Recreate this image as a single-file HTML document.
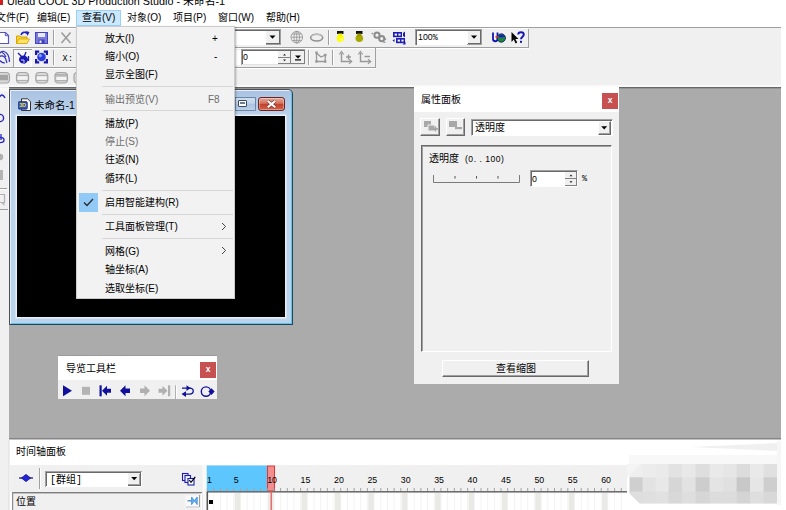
<!DOCTYPE html>
<html lang="zh-CN">
<head>
<meta charset="utf-8">
<title>Ulead COOL 3D Production Studio - 未命名-1</title>
<style>
html,body{margin:0;padding:0;}
body{width:786px;height:510px;overflow:hidden;background:#fff;position:relative;
 font-family:"Liberation Sans","Noto Sans CJK SC",sans-serif;font-size:10px;color:#000;}
.abs{position:absolute;}
#app{position:absolute;left:0;top:0;width:781px;height:510px;overflow:hidden;background:#fff;}
.t{position:absolute;white-space:nowrap;line-height:14px;}
.sm{font-size:11px;}
/* menubar */
#menubar .t{top:11px;font-size:10px;}
/* toolbars */
#tb{position:absolute;left:0;top:27px;width:781px;height:60px;background:#f0f0f0;border-top:1px solid #a0a0a0;box-sizing:border-box;box-shadow:inset 0 -2px 0 #f9f9f9;}
.vsep{position:absolute;width:1px;background:#a0a0a0;box-shadow:1px 0 0 #fff;}
.hsep{position:absolute;height:1px;background:#a0a0a0;box-shadow:0 1px 0 #fff;}
/* workspace */
#ws{position:absolute;left:0;top:87px;width:781px;height:351px;background:#ababab;box-shadow:inset 0 1px 0 #666,inset 0 2px 0 #939393;}
/* dropdown menu */
#dd{position:absolute;left:76px;top:26px;width:159px;height:273px;background:#f2f2f2;border:1px solid #ccc;box-sizing:border-box;box-shadow:1px 1px 2px rgba(0,0,0,.3);}
#dd .t{left:28px;font-size:10px;margin-top:1px;}
#dd .k{left:auto;}
#dd .g{color:#6d6d6d;}
#dd .s{position:absolute;left:25px;right:1px;height:1px;background:#d7d7d7;}
.sunk{position:absolute;box-sizing:border-box;background:#fff;border:1px solid;border-color:#a0a0a0 #fff #fff #a0a0a0;box-shadow:inset 1px 1px 0 #696969;}
.btn{position:absolute;box-sizing:border-box;background:#f0f0f0;border:1px solid;border-color:#fff #696969 #696969 #fff;box-shadow:inset -1px -1px 0 #a0a0a0;}
.redx{position:absolute;background:#c75050;color:#fff;font-weight:bold;font-size:8.5px;text-align:center;}
</style>
</head>
<body>
<div id="app">

<!-- title bar (cut) -->
<div class="abs" style="left:0;top:0;width:3px;height:5px;background:#d21f1f"></div>
<div class="t" style="left:7px;top:-6px;font-size:10.8px;">Ulead COOL 3D Production Studio - 未命名-1</div>

<!-- menubar -->
<div id="menubar">
 <div class="abs" style="left:76px;top:10px;width:45px;height:16px;background:#cce8ff;border:1px solid #99d1ff;box-sizing:border-box"></div>
 <div class="t" style="left:-4px">文件(F)</div>
 <div class="t" style="left:37px">编辑(E)</div>
 <div class="t" style="left:82px">查看(V)</div>
 <div class="t" style="left:127px">对象(O)</div>
 <div class="t" style="left:173px">项目(P)</div>
 <div class="t" style="left:218px">窗口(W)</div>
 <div class="t" style="left:266px">帮助(H)</div>
</div>

<!-- toolbar area -->
<div id="tb">

<svg class="abs" style="left:0;top:-1px" width="781" height="61" viewBox="0 27 781 61" shape-rendering="auto">
 <!-- toolbar borders -->
 <rect x="0" y="47" width="529" height="1" fill="#a0a0a0"/><rect x="0" y="48" width="529" height="1" fill="#fff"/>
 <rect x="0" y="67" width="376" height="1" fill="#a0a0a0"/><rect x="0" y="68" width="376" height="1" fill="#fff"/>
 <rect x="528" y="28" width="1" height="19" fill="#a0a0a0"/>
 <rect x="375" y="48" width="1" height="19" fill="#a0a0a0"/>
 <rect x="0" y="28" width="529" height="1" fill="#fff"/>
 <!-- row1 -->
 <path d="M-2 32.5 H5.5 L8.5 35.5 V43.5 H-2" fill="#fff" stroke="#5555c4" stroke-width="1.2"/>
 <path d="M5.3 32.5 V35.7 H8.5" fill="none" stroke="#5555c4" stroke-width="1"/>
 <!-- open -->
 <path d="M16.5 43.5 V36 H20 L21 37 H27 V43.5 Z" fill="#f5d13a" stroke="#d9a400" stroke-width="1"/>
 <path d="M16.5 43.5 L19 39 H29.5 L27 43.5 Z" fill="#ffe36a" stroke="#d9a400" stroke-width=".8"/>
 <path d="M21 35 C22 32 25 31.5 27 33.5" fill="none" stroke="#2222c0" stroke-width="1.6"/>
 <path d="M25.5 31 L29.5 32 L27.5 36 Z" fill="#2222c0"/>
 <!-- save -->
 <rect x="35.5" y="32.5" width="12" height="11" fill="#7a7ad8" stroke="#4444c0" stroke-width="1"/>
 <rect x="38" y="33" width="7" height="4" fill="#e8e8ff"/>
 <rect x="38.5" y="39.5" width="6" height="4" fill="#4040b8"/><rect x="39.5" y="40.5" width="2" height="2.5" fill="#e8e8ff"/>
 <rect x="53" y="30" width="1" height="15" fill="#a0a0a0"/><rect x="54" y="30" width="1" height="15" fill="#fff"/>
 <path d="M61.5 32.5 L70.5 43 M70.5 32.5 L61.5 43" stroke="#9a9a9a" stroke-width="1.5" fill="none"/>
 <!-- combo row1 (partly hidden) -->
 <rect x="150" y="30" width="131" height="15" fill="#fff"/>
 <rect x="150" y="30" width="131" height="1" fill="#696969"/><rect x="150" y="29" width="131" height="1" fill="#a0a0a0"/>
 <rect x="266" y="31" width="14" height="13" fill="#f0f0f0"/>
 <rect x="266" y="43" width="14" height="1" fill="#696969"/><rect x="279" y="31" width="1" height="13" fill="#696969"/>
 <rect x="266" y="44" width="15" height="1" fill="#a0a0a0"/><rect x="280" y="30" width="1" height="15" fill="#a0a0a0"/>
 <path d="M269.5 35.5 H275.5 L272.5 38.8 Z" fill="#000"/>
 <!-- globe -->
 <g stroke="#909090" fill="none" stroke-width=".8"><circle cx="296.8" cy="37.2" r="5.8"/><ellipse cx="296.8" cy="37.2" rx="2.8" ry="5.8"/><path d="M291 37.2 H302.6 M296.8 31.4 V43 M292 34 H301.6 M292 40.4 H301.6"/></g>
 <!-- oval -->
 <g stroke="#909090" fill="none"><ellipse cx="316.7" cy="37.6" rx="6" ry="3.4" stroke-width="1.6"/><path d="M311 36.5 C314 33.5 320 33.5 322.5 36.5" stroke="#c8c8c8" stroke-width="1"/></g>
 <rect x="328" y="30" width="1" height="15" fill="#a0a0a0"/><rect x="329" y="30" width="1" height="15" fill="#fff"/>
 <!-- bulbs -->
 <rect x="337" y="31" width="6.5" height="3" fill="#111"/><circle cx="340.3" cy="38.3" r="3.6" fill="#ffff00"/><rect x="338.3" y="33.5" width="4" height="3" fill="#f4f400"/>
 <circle cx="341.5" cy="39.5" r="1" fill="#fff"/>
 <rect x="356" y="31" width="6.5" height="3" fill="#111"/><circle cx="359.3" cy="38.3" r="3.8" fill="#a8a800"/><rect x="357.3" y="33.5" width="4" height="3" fill="#989800"/>
 <!-- gears -->
 <g fill="none" stroke="#8c8c8c" stroke-width="2"><circle cx="377" cy="35.2" r="2.6"/><circle cx="381.7" cy="38.6" r="2.6"/></g>
 <path d="M373 33 l-1.3 1 M383 42 l2.4 .3 M385 40 l1 -1.5" stroke="#8c8c8c" stroke-width="1.2"/>
 <!-- blue grid icon -->
 <g fill="#1c1cb4"><rect x="393" y="32" width="9" height="1.6"/><rect x="393" y="35.6" width="9" height="1.6"/><rect x="393" y="32" width="1.6" height="5"/><rect x="397" y="32" width="1.4" height="5"/><rect x="400.6" y="32" width="1.4" height="5"/>
 <rect x="396" y="38" width="9" height="1.6"/><rect x="396" y="41.6" width="9" height="1.6"/><rect x="396" y="38" width="1.6" height="5"/><rect x="400" y="38" width="1.4" height="5"/><rect x="403.6" y="38" width="1.4" height="5"/>
 <path d="M403 33 l2 -1.5 v6 l-2 -1.5z M392.5 40.5 l2 -1.5 v3z M402.5 44.5 h3 v-3z"/></g>
 <!-- combo 100% -->
 <rect x="416" y="30" width="65" height="15" fill="#fff"/>
 <rect x="416" y="30" width="65" height="1" fill="#696969"/><rect x="416" y="30" width="1" height="15" fill="#696969"/>
 <rect x="415" y="29" width="67" height="1" fill="#a0a0a0"/><rect x="415" y="29" width="1" height="16" fill="#a0a0a0"/>
 <rect x="468" y="31" width="13" height="13" fill="#f0f0f0"/><rect x="468" y="43" width="13" height="1" fill="#696969"/><rect x="480" y="31" width="1" height="13" fill="#696969"/>
 <rect x="467" y="44" width="15" height="1" fill="#a0a0a0"/><rect x="481" y="30" width="1" height="15" fill="#a0a0a0"/>
 <path d="M471 35.5 H477 L474 38.8 Z" fill="#000"/>
 <text x="418" y="40.3" font-family="Liberation Sans, sans-serif" font-size="8.8" fill="#000">100<tspan font-family="Liberation Mono, monospace" font-size="8.4">%</tspan></text>
 <!-- U + globe -->
 <path d="M493 32.5 V39 C493 42 497.5 42 497.5 39 V32.5" fill="none" stroke="#1414b4" stroke-width="1.8"/>
 <circle cx="501.3" cy="38" r="4.2" fill="#1a8a3a"/><path d="M498 36.5 C500 34 503 34 505 36.5 C503 37.5 500 38 498 36.5z" fill="#1c1ccc"/><circle cx="501.3" cy="38" r="4.2" fill="none" stroke="#10106c" stroke-width=".8"/>
 <rect x="495.5" y="36" width="3" height="1.5" fill="#e03030"/>
 <!-- pointer ? -->
 <path d="M511.5 32 V42 L513.8 39.6 L515.6 43.4 L517.2 42.6 L515.4 39 H518.5 Z" fill="#000"/>
 <path d="M518.2 34.6 C518.2 31.4 523.8 31.4 523.8 34.6 C523.8 36.6 521 36.8 521 39.2" fill="none" stroke="#1414b4" stroke-width="1.9"/><rect x="520" y="40.8" width="2" height="2" fill="#1414b4"/>
 <!-- row2 -->
 <g fill="none" stroke="#3030c0" stroke-width="1.2"><path d="M-1 54 C2 50 6 51 8 55 C9.5 58 9.5 60 9.5 62"/><path d="M-1 57 C1 55 4 55.5 5.5 58.5 C6 60 6.5 61.5 7 63"/><path d="M-1 60 C1 62 3 63 5 63"/><path d="M2 52.5 C3.5 53 5 55 6 57"/></g>
 <rect x="13.5" y="49.5" width="18" height="17" fill="#f6f6f6" stroke="#fff" stroke-width="1"/><rect x="13" y="49" width="19" height="1" fill="#a0a0a0"/><rect x="13" y="49" width="1" height="18" fill="#a0a0a0"/>
 <ellipse cx="23.5" cy="59.5" rx="4.5" ry="4" fill="#1818b0"/><path d="M18 53 L24 59 M26 52 L24 57 M28.5 56 V61 M20 60.5 H24.5 V63.5" stroke="#1818b0" stroke-width="1.3" fill="none"/><path d="M21 60 H24 V63" stroke="#fff" stroke-width=".8" fill="none"/>
 <circle cx="41.5" cy="57" r="4.3" fill="#2a3ee0"/><circle cx="40.3" cy="55.6" r="1.6" fill="#8aa0ff"/>
 <g fill="#1818b0"><path d="M35 50.5 h4.2 v2.2 h-2 v2.2 h-2.2z M48 50.5 h-4.2 v2.2 h2 v2.2 h2.2z M35 63.5 h4.2 v-2.2 h-2 v-2.2 h-2.2z M48 63.5 h-4.2 v-2.2 h2 v-2.2 h2.2z"/></g>
 <rect x="53" y="50" width="1" height="15" fill="#a0a0a0"/><rect x="54" y="50" width="1" height="15" fill="#fff"/>
 <text x="62.5" y="61" font-family="Liberation Mono, monospace" font-size="8.4" fill="#000" letter-spacing=".4">X:</text>
 <!-- input row2 -->
 <rect x="150" y="50" width="129" height="15" fill="#fff"/>
 <rect x="241" y="49" width="64" height="1" fill="#a0a0a0"/><rect x="241" y="49" width="1" height="16" fill="#a0a0a0"/>
 <rect x="242" y="50" width="63" height="1" fill="#696969"/><rect x="242" y="50" width="1" height="14" fill="#696969"/>
 <rect x="242" y="64" width="63" height="1" fill="#e3e3e3"/>
 <rect x="278" y="51" width="13" height="13" fill="#f0f0f0"/><rect x="278" y="57" width="13" height="1" fill="#808080"/><rect x="278" y="63" width="13" height="1" fill="#808080"/><rect x="290" y="51" width="1" height="13" fill="#808080"/>
 <path d="M283 55.5 h3 l-1.5 -1.8z M283 59.5 h3 l-1.5 1.8z" fill="#222"/>
 <rect x="291" y="51" width="13" height="13" fill="#f0f0f0"/><rect x="291" y="63" width="14" height="1" fill="#808080"/><rect x="304" y="50" width="1" height="14" fill="#808080"/>
 <path d="M295 55.5 H301 L298 58.6 Z" fill="#000"/><rect x="295" y="59.3" width="6" height="1.2" fill="#000"/>
 <text x="243" y="59.8" font-family="Liberation Sans, sans-serif" font-size="8.8" fill="#000">0</text>
 <rect x="308" y="50" width="1" height="15" fill="#a0a0a0"/><rect x="309" y="50" width="1" height="15" fill="#fff"/>
 <g fill="none" stroke="#989898" stroke-width="1.3"><path d="M316.5 52.5 V61.5 H326 M316.5 53 L321 57 L325.5 55 L325 61.5"/></g>
 <g fill="#989898"><rect x="315.3" y="51.5" width="2.4" height="2.4"/><rect x="315.3" y="60.3" width="2.4" height="2.4"/><rect x="324" y="60.3" width="2.4" height="2.4"/><rect x="324" y="53.8" width="2.4" height="2.4"/></g>
 <rect x="332" y="50" width="1" height="15" fill="#a0a0a0"/><rect x="333" y="50" width="1" height="15" fill="#fff"/>
 <g fill="none" stroke="#989898" stroke-width="1.4"><path d="M341.5 53 V61.5 H351 M346 57 h5 M348.5 54.5 v5"/><path d="M339.3 54.5 L341.5 51.5 L343.7 54.5 M349 59.3 L351.8 61.5 L349 63.7" stroke-width="1.1"/></g>
 <g fill="none" stroke="#989898" stroke-width="1.4"><path d="M360.5 53 V61.5 H370 M364.5 56.5 h5.5"/><path d="M358.3 54.5 L360.5 51.5 L362.7 54.5 M368 59.3 L370.8 61.5 L368 63.7" stroke-width="1.1"/></g>
 <!-- row3 grey icons -->
 <g stroke="#a6a6a6" stroke-width="1.2">
  <rect x="-3" y="72.5" width="12.5" height="10.5" rx="3.5" fill="#dadada"/><rect x="-3" y="74.8" width="11" height="5.5" fill="#a4a4a4" stroke="none"/>
  <rect x="16.5" y="72.5" width="12" height="10.5" rx="3.5" fill="#d8d8d8"/><rect x="17.6" y="76.2" width="9.8" height="3.8" fill="#f4f4f4" stroke="none"/><path d="M17 75.6 H28 M17 80.4 H28" fill="none" stroke-width=".9"/>
  <rect x="35.8" y="72.5" width="12" height="10.5" rx="3.5" fill="#d8d8d8"/><rect x="37" y="76.2" width="9.6" height="3.8" fill="#f4f4f4" stroke="none"/><path d="M36.3 75.6 H47.3 M36.3 80.4 H47.3" fill="none" stroke-width=".9"/>
  <rect x="55" y="72.5" width="12.5" height="10.5" rx="3.5" fill="#d0d0d0"/><rect x="56.4" y="76.6" width="9.8" height="3.6" fill="#f4f4f4" stroke="none"/><path d="M55.5 74.6 H67 M55.5 76 H67 M55.5 80.6 H67" fill="none" stroke-width=".9"/>
  <rect x="74" y="72.5" width="12.5" height="10.5" rx="3.5" fill="#dcdcdc"/>
 </g>
</svg>

</div>

<!-- workspace -->
<div id="ws">

<!-- left vertical toolbar -->
<div class="abs" style="left:0;top:0;width:9px;height:423px;background:#f0f0f0;"></div>
<svg class="abs" style="left:0;top:0" width="9" height="130" viewBox="0 88 9 130">
 <rect x="8" y="88" width="1" height="123" fill="#fafafa"/>
 <rect x="0" y="210" width="8" height="1" fill="#a0a0a0"/>
 <rect x="0" y="89" width="8" height="3.5" fill="#fafafa"/>
 <path d="M-1 99 C1 95 3 95 5 99" fill="none" stroke="#2828c0" stroke-width="1.4"/>
 <circle cx="0" cy="119" r="3.6" fill="none" stroke="#2828c0" stroke-width="1.4"/>
 <ellipse cx="0" cy="141" rx="4" ry="2.6" fill="none" stroke="#2828c0" stroke-width="1.4"/><path d="M1 135 V141" stroke="#2828c0" stroke-width="1.3"/>
 <circle cx="0" cy="158" r="3.2" fill="#b0b0b0"/>
 <rect x="-1" y="171" width="4" height="10" fill="#b4b4b4"/>
 <rect x="0" y="189" width="7" height="1" fill="#a0a0a0"/><rect x="0" y="190" width="7" height="1" fill="#fff"/>
 <path d="M-1 195.5 H4.5 V203.5 H-1 M2 203.5 L4.5 206" fill="none" stroke="#b0b0b0" stroke-width="1.2"/>
</svg>

<!-- child window -->
<div class="abs" id="cw" style="left:9px;top:2px;width:284px;height:236px;box-sizing:border-box;border:1px solid;border-color:#505050 #1c4a5c #1c4a5c #505050;border-radius:1px 5px 1px 1px;background:linear-gradient(#a9c3e2 0,#bdd3ec 28px,#bcd3ec 100%);box-shadow:inset 1px 1px 0 #e4eefa,inset -1px -1px 0 #62c0e6;">
 <div class="abs" style="left:7px;top:26px;width:268px;height:201px;background:#000;box-shadow:0 0 0 1.5px #e9f0f9;"></div>
 <!-- icon -->
 <svg class="abs" style="left:8px;top:8px" width="14" height="14" viewBox="0 0 14 14">
  <path d="M3.5 .8 H9.5 L12.5 3.6 V12.5 H3.5 Z" fill="#fff" stroke="#333" stroke-width="1"/>
  <rect x=".3" y="3.6" width="9" height="7.6" rx="1.2" fill="#2a52c0" stroke="#1a2e7c" stroke-width=".8"/>
  <text x="1.2" y="9.4" font-family="Liberation Sans, sans-serif" font-weight="bold" font-size="5.6" fill="#f6d81c" letter-spacing="-.3">3D</text>
 </svg>
 <div class="t" style="left:24px;top:8px;font-size:10.5px;">未命名-1</div>
 <!-- buttons -->
 <div class="abs" style="left:205px;top:7px;width:41px;height:14px;box-sizing:border-box;border:1px solid #6d86a6;border-radius:3px 0 0 3px;background:linear-gradient(#cfdff1 0,#bfd2ea 45%,#a9c2e0 50%,#bcd1ea 100%);"></div>
 <div class="abs" style="left:225px;top:8px;width:1px;height:12px;background:#7f98b8"></div>
 <div class="abs" style="left:228px;top:10px;width:9px;height:7px;box-sizing:border-box;border:1px solid #3b4a60;border-radius:1px;background:#fff;box-shadow:inset 0 0 0 1px #fff, inset 0 2px 0 1px #6a7a90;"></div>
 <div class="abs" style="left:248px;top:7px;width:27px;height:14px;box-sizing:border-box;border:1px solid #6b2420;border-radius:3px;background:linear-gradient(#e3a99b 0,#d4715c 45%,#c1402a 50%,#d0624a 100%);box-shadow:inset 0 0 0 1px rgba(255,255,255,.35);"></div>
 <svg class="abs" style="left:255px;top:9px" width="13" height="11" viewBox="0 0 13 11"><path d="M2.8 2 L10.2 8.2 M10.2 2 L2.8 8.2" stroke="#7a3a32" stroke-width="3.4"/><path d="M2.8 2 L10.2 8.2 M10.2 2 L2.8 8.2" stroke="#fff" stroke-width="2.1"/></svg>
</div>

<!-- nav toolbar -->
<div class="abs" style="left:58px;top:268px;width:159px;height:44px;background:#f0f0f0;overflow:hidden">
 <div class="abs" style="left:0;top:0;width:159px;height:25px;background:#fff;box-shadow:inset 0 1px 0 #9a9a9a"></div>
 <div class="t" style="left:8px;top:7px;font-size:10px;">导览工具栏</div>
 <div class="redx" style="left:142px;top:7px;width:16px;height:16px;line-height:15px;">x</div>
 <svg class="abs" style="left:0;top:23px" width="160" height="22" viewBox="58 376.7 160 22">
  <path d="M63 384 L72 389.5 L63 395 Z" fill="#10109c"/>
  <rect x="82" y="385.5" width="8" height="8" fill="#b4b4b4"/>
  <rect x="99.5" y="384" width="2.2" height="11" fill="#10109c"/><path d="M102 389.5 L107 384.5 V387.5 H111 V391.5 H107 V394.5 Z" fill="#10109c"/>
  <path d="M120 389.5 L125.5 384 V387.3 H130 V391.7 H125.5 V395 Z" fill="#10109c"/>
  <path d="M150 389.5 L144.5 384 V387.3 H140 V391.7 H144.5 V395 Z" fill="#b0b0b0"/>
  <rect x="168" y="384" width="2.2" height="11" fill="#b0b0b0"/><path d="M167.5 389.5 L162.5 384.5 V387.5 H158.5 V391.5 H162.5 V394.5 Z" fill="#b0b0b0"/>
  <rect x="175" y="384" width="1" height="14.5" fill="#b0b0b0"/><rect x="176" y="384" width="1" height="14.5" fill="#fff"/>
  <g fill="none" stroke="#10109c" stroke-width="1.3"><path d="M182 386.8 H189.5 C194.5 386.8 194.5 392.8 189.5 392.8 H184"/></g>
  <path d="M186.5 384 L190.5 386.8 L186.5 389.6 Z M186 390 L181.5 392.8 L186 395.6 Z" fill="#10109c"/>
  <circle cx="206" cy="390.3" r="4.7" fill="none" stroke="#10109c" stroke-width="1.4"/><path d="M211.5 387 L214.6 390.3 L211.5 393.6 L208.4 390.3 Z" fill="#10109c"/>
 </svg>
</div>

<!-- property panel -->
<div class="abs" id="pp" style="left:414px;top:0;width:205px;height:297px;background:#f0f0f0;">
 <div class="abs" style="left:0;top:0;width:205px;height:25px;background:#fff"></div>
 <div class="t" style="left:7px;top:6px;font-size:10px;">属性面板</div>
 <div class="redx" style="left:188px;top:6px;width:16px;height:16px;line-height:15px;">x</div>
 <div class="btn" style="left:6px;top:31px;width:20px;height:18px;"></div>
 <div class="btn" style="left:32px;top:31px;width:19px;height:18px;"></div>
 <svg class="abs" style="left:7px;top:31px" width="44" height="18" viewBox="0 0 44 18">
  <g fill="#a8a8a8"><rect x="3" y="3" width="7" height="6"/><rect x="7" y="7" width="7" height="6" stroke="#f0f0f0" stroke-width="1"/><path d="M12 11 h5 M14.5 8.5 v5" stroke="#a0a0a0" stroke-width="1.4"/>
  <rect x="28" y="3" width="8" height="6"/><rect x="34" y="9" width="7" height="2.2"/></g>
 </svg>
 <div class="sunk" style="left:57px;top:32px;width:142px;height:17px;"></div>
 <div class="btn" style="left:184px;top:34px;width:13px;height:14px;"></div>
 <svg class="abs" style="left:184px;top:34px" width="13" height="14" viewBox="0 0 13 14"><path d="M3.2 5.3 H9.2 L6.2 8.6 Z" fill="#000"/></svg>
 <div class="t" style="left:61px;top:34px;font-size:10px;">透明度</div>
 <!-- group -->
 <div class="abs" style="left:7px;top:58px;width:191px;height:207px;box-sizing:border-box;border:1px solid;border-color:#696969 #fff #fff #696969;box-shadow:inset 1px 1px 0 #a0a0a0;"></div>
 <div class="t" style="left:15px;top:65px;font-size:10px;">透明度<span style="font-size:8.6px;letter-spacing:.5px;margin-left:6px">(0. . 100)</span></div>
 <svg class="abs" style="left:17px;top:86px" width="92" height="12" viewBox="431 173 92 12">
  <path d="M433.5 175 V182.5 H519.5 V175" fill="none" stroke="#7a7a7a" stroke-width="1"/>
  <path d="M455 176 v2.6 M476.5 176 v2.6 M498 176 v2.6" stroke="#555" stroke-width="1"/>
 </svg>
 <div class="sunk" style="left:116px;top:83px;width:48px;height:17px;"></div>
 <div class="t" style="left:118px;top:85px;font-size:8.8px;">0</div>
 <svg class="abs" style="left:151px;top:85px" width="12" height="14" viewBox="0 0 12 14"><rect width="12" height="14" fill="#f0f0f0"/><rect y="6" width="12" height="1" fill="#808080"/><rect y="13" width="12" height="1" fill="#808080"/><rect x="11" width="1" height="14" fill="#808080"/><path d="M4.5 4.3 h3 l-1.5 -1.8z M4.5 9.3 h3 l-1.5 1.8z" fill="#222"/></svg>
 <div class="t" style="left:168px;top:85px;font-family:'Liberation Mono',monospace;font-size:8.4px;">%</div>
 <div class="btn" style="left:28px;top:273px;width:147px;height:17px;"></div>
 <div class="t" style="left:28px;top:275px;width:148px;text-align:center;font-size:10px;">查看缩图</div>
</div>

</div>

<!-- timeline -->
<div id="tl">

<div class="abs" style="left:9px;top:438px;width:772px;height:72px;background:#fff;"></div>
<svg class="abs" style="left:0;top:437px;filter:none" width="781" height="73" viewBox="0 437 781 73" font-family="Liberation Sans, sans-serif" font-size="8.8" fill="#000">
 <rect x="0" y="438" width="9" height="72" fill="#f0f0f0"/>
 <rect x="9" y="438" width="772" height="1.5" fill="#858585"/>
 <rect x="8.5" y="439" width="1" height="71" fill="#dcdcdc"/>
 <!-- toolbar row -->
 <rect x="9" y="465" width="620" height="27" fill="#f0f0f0"/>
 <path d="M19 478 H33" stroke="#10106c" stroke-width="1.2"/><path d="M26 474.4 L30.6 478 L26 481.6 L21.4 478 Z" fill="#2424d8" stroke="#10108c" stroke-width=".8"/>
 <rect x="39" y="468" width="1" height="21" fill="#a0a0a0"/><rect x="40" y="468" width="1" height="21" fill="#fff"/>
 <!-- combo -->
 <rect x="45" y="471" width="97" height="16" fill="#fff"/>
 <rect x="45" y="471" width="97" height="1" fill="#a0a0a0"/><rect x="45" y="471" width="1" height="16" fill="#a0a0a0"/>
 <rect x="46" y="472" width="95" height="1" fill="#696969"/><rect x="46" y="472" width="1" height="14" fill="#696969"/>
 <rect x="46" y="486" width="96" height="1" fill="#fff"/><rect x="141" y="472" width="1" height="15" fill="#fff"/>
 <rect x="128" y="473" width="13" height="13" fill="#f0f0f0"/><rect x="128" y="485" width="13" height="1" fill="#696969"/><rect x="140" y="473" width="1" height="13" fill="#696969"/><rect x="128" y="484" width="12" height="1" fill="#a0a0a0"/><rect x="139" y="474" width="1" height="11" fill="#a0a0a0"/>
 <path d="M131.2 477 H137.2 L134.2 480.3 Z" fill="#000"/>
 <!-- copy/check icon -->
 <g fill="#f0f0f0" stroke="#1c1cb4" stroke-width="1.1"><rect x="182.5" y="473.5" width="5.5" height="7"/><rect x="185" y="475.5" width="5.5" height="7"/><rect x="188" y="478.5" width="6" height="6.5" fill="#fff"/></g>
 <path d="M189.2 480 L191 482.3 L195.3 476.8" fill="none" stroke="#000" stroke-width="1.2"/>
 <!-- ruler -->
 <rect x="206.5" y="465.5" width="61" height="25.5" fill="#5cc6fd"/>
 <rect x="267.5" y="466" width="7" height="25" fill="#f48e8e" stroke="#e23636" stroke-width="1"/>
 <rect x="206.6" y="488" width="1" height="3" fill="#a4a4a4"/><rect x="213.3" y="488" width="1" height="3" fill="#a4a4a4"/><rect x="220.0" y="488" width="1" height="3" fill="#a4a4a4"/><rect x="226.6" y="488" width="1" height="3" fill="#a4a4a4"/><rect x="233.3" y="488" width="1" height="3" fill="#a4a4a4"/><rect x="240.0" y="488" width="1" height="3" fill="#a4a4a4"/><rect x="246.7" y="488" width="1" height="3" fill="#a4a4a4"/><rect x="253.4" y="488" width="1" height="3" fill="#a4a4a4"/><rect x="260.0" y="488" width="1" height="3" fill="#a4a4a4"/><rect x="266.7" y="488" width="1" height="3" fill="#a4a4a4"/><rect x="273.4" y="488" width="1" height="3" fill="#a4a4a4"/><rect x="280.1" y="488" width="1" height="3" fill="#a4a4a4"/><rect x="286.8" y="488" width="1" height="3" fill="#a4a4a4"/><rect x="293.4" y="488" width="1" height="3" fill="#a4a4a4"/><rect x="300.1" y="488" width="1" height="3" fill="#a4a4a4"/><rect x="306.8" y="488" width="1" height="3" fill="#a4a4a4"/><rect x="313.5" y="488" width="1" height="3" fill="#a4a4a4"/><rect x="320.2" y="488" width="1" height="3" fill="#a4a4a4"/><rect x="326.8" y="488" width="1" height="3" fill="#a4a4a4"/><rect x="333.5" y="488" width="1" height="3" fill="#a4a4a4"/><rect x="340.2" y="488" width="1" height="3" fill="#a4a4a4"/><rect x="346.9" y="488" width="1" height="3" fill="#a4a4a4"/><rect x="353.6" y="488" width="1" height="3" fill="#a4a4a4"/><rect x="360.2" y="488" width="1" height="3" fill="#a4a4a4"/><rect x="366.9" y="488" width="1" height="3" fill="#a4a4a4"/><rect x="373.6" y="488" width="1" height="3" fill="#a4a4a4"/><rect x="380.3" y="488" width="1" height="3" fill="#a4a4a4"/><rect x="387.0" y="488" width="1" height="3" fill="#a4a4a4"/><rect x="393.6" y="488" width="1" height="3" fill="#a4a4a4"/><rect x="400.3" y="488" width="1" height="3" fill="#a4a4a4"/><rect x="407.0" y="488" width="1" height="3" fill="#a4a4a4"/><rect x="413.7" y="488" width="1" height="3" fill="#a4a4a4"/><rect x="420.4" y="488" width="1" height="3" fill="#a4a4a4"/><rect x="427.0" y="488" width="1" height="3" fill="#a4a4a4"/><rect x="433.7" y="488" width="1" height="3" fill="#a4a4a4"/><rect x="440.4" y="488" width="1" height="3" fill="#a4a4a4"/><rect x="447.1" y="488" width="1" height="3" fill="#a4a4a4"/><rect x="453.8" y="488" width="1" height="3" fill="#a4a4a4"/><rect x="460.4" y="488" width="1" height="3" fill="#a4a4a4"/><rect x="467.1" y="488" width="1" height="3" fill="#a4a4a4"/><rect x="473.8" y="488" width="1" height="3" fill="#a4a4a4"/><rect x="480.5" y="488" width="1" height="3" fill="#a4a4a4"/><rect x="487.2" y="488" width="1" height="3" fill="#a4a4a4"/><rect x="493.8" y="488" width="1" height="3" fill="#a4a4a4"/><rect x="500.5" y="488" width="1" height="3" fill="#a4a4a4"/><rect x="507.2" y="488" width="1" height="3" fill="#a4a4a4"/><rect x="513.9" y="488" width="1" height="3" fill="#a4a4a4"/><rect x="520.6" y="488" width="1" height="3" fill="#a4a4a4"/><rect x="527.2" y="488" width="1" height="3" fill="#a4a4a4"/><rect x="533.9" y="488" width="1" height="3" fill="#a4a4a4"/><rect x="540.6" y="488" width="1" height="3" fill="#a4a4a4"/><rect x="547.3" y="488" width="1" height="3" fill="#a4a4a4"/><rect x="554.0" y="488" width="1" height="3" fill="#a4a4a4"/><rect x="560.6" y="488" width="1" height="3" fill="#a4a4a4"/><rect x="567.3" y="488" width="1" height="3" fill="#a4a4a4"/><rect x="574.0" y="488" width="1" height="3" fill="#a4a4a4"/><rect x="580.7" y="488" width="1" height="3" fill="#a4a4a4"/><rect x="587.4" y="488" width="1" height="3" fill="#a4a4a4"/><rect x="594.0" y="488" width="1" height="3" fill="#a4a4a4"/><rect x="600.7" y="488" width="1" height="3" fill="#a4a4a4"/><rect x="607.4" y="488" width="1" height="3" fill="#a4a4a4"/><rect x="614.1" y="488" width="1" height="3" fill="#a4a4a4"/><rect x="620.8" y="488" width="1" height="3" fill="#a4a4a4"/>
 <rect x="206.5" y="491" width="420.5" height="1.6" fill="#6e6e6e"/>
 <text x="207.1" y="483">1</text><text x="233.8" y="483">5</text><text x="267.2" y="483">10</text><text x="300.6" y="483">15</text><text x="334.0" y="483">20</text><text x="367.4" y="483">25</text><text x="400.8" y="483">30</text><text x="434.2" y="483">35</text><text x="467.6" y="483">40</text><text x="501.0" y="483">45</text><text x="534.4" y="483">50</text><text x="567.8" y="483">55</text><text x="601.2" y="483">60</text>
 <!-- list row -->
 <rect x="12" y="492" width="190" height="18" fill="#f0f0f0"/>
 <rect x="12" y="492" width="190" height="1.4" fill="#7c7c7c"/><rect x="12" y="492" width="1.2" height="18" fill="#8c8c8c"/>
 <rect x="201" y="493" width="1" height="17" fill="#fff"/><rect x="202" y="492" width="1" height="18" fill="#d8d8d8"/>
 <rect x="185.5" y="495.5" width="13.5" height="11" fill="#f8f8f8"/><rect x="199" y="495" width="1" height="12" fill="#9c9c9c"/><rect x="186" y="506.5" width="13" height="1" fill="#c8c8c8"/>
 <path d="M187.5 500.8 H191.5" stroke="#3a7ac8" stroke-width="1.2"/>
 <path d="M191.6 497 L194.4 500.8 L197.2 497 V504.6 L194.4 500.8 L191.6 504.6 Z" fill="#62b4f4" stroke="#3a86d8" stroke-width=".8"/>
 <rect x="202.5" y="465" width="4" height="45" fill="#f9f9f9"/>
 <!-- track -->
 <rect x="213.3" y="493" width="1" height="17" fill="#f3f3f3"/><rect x="220.0" y="493" width="1" height="17" fill="#f3f3f3"/><rect x="226.6" y="493" width="1" height="17" fill="#f3f3f3"/><rect x="233.3" y="493" width="1" height="17" fill="#f3f3f3"/><rect x="240.0" y="493" width="1" height="17" fill="#f3f3f3"/><rect x="246.7" y="493" width="1" height="17" fill="#f3f3f3"/><rect x="253.4" y="493" width="1" height="17" fill="#f3f3f3"/><rect x="260.0" y="493" width="1" height="17" fill="#f3f3f3"/><rect x="266.7" y="493" width="1" height="17" fill="#f3f3f3"/><rect x="273.4" y="493" width="1" height="17" fill="#f3f3f3"/><rect x="280.1" y="493" width="1" height="17" fill="#f3f3f3"/><rect x="286.8" y="493" width="1" height="17" fill="#f3f3f3"/><rect x="293.4" y="493" width="1" height="17" fill="#f3f3f3"/><rect x="300.1" y="493" width="1" height="17" fill="#f3f3f3"/><rect x="306.8" y="493" width="1" height="17" fill="#f3f3f3"/><rect x="313.5" y="493" width="1" height="17" fill="#f3f3f3"/><rect x="320.2" y="493" width="1" height="17" fill="#f3f3f3"/><rect x="326.8" y="493" width="1" height="17" fill="#f3f3f3"/><rect x="333.5" y="493" width="1" height="17" fill="#f3f3f3"/><rect x="340.2" y="493" width="1" height="17" fill="#f3f3f3"/><rect x="346.9" y="493" width="1" height="17" fill="#f3f3f3"/><rect x="353.6" y="493" width="1" height="17" fill="#f3f3f3"/><rect x="360.2" y="493" width="1" height="17" fill="#f3f3f3"/><rect x="366.9" y="493" width="1" height="17" fill="#f3f3f3"/><rect x="373.6" y="493" width="1" height="17" fill="#f3f3f3"/><rect x="380.3" y="493" width="1" height="17" fill="#f3f3f3"/><rect x="387.0" y="493" width="1" height="17" fill="#f3f3f3"/><rect x="393.6" y="493" width="1" height="17" fill="#f3f3f3"/><rect x="400.3" y="493" width="1" height="17" fill="#f3f3f3"/><rect x="407.0" y="493" width="1" height="17" fill="#f3f3f3"/><rect x="413.7" y="493" width="1" height="17" fill="#f3f3f3"/><rect x="420.4" y="493" width="1" height="17" fill="#f3f3f3"/><rect x="427.0" y="493" width="1" height="17" fill="#f3f3f3"/><rect x="433.7" y="493" width="1" height="17" fill="#f3f3f3"/><rect x="440.4" y="493" width="1" height="17" fill="#f3f3f3"/><rect x="447.1" y="493" width="1" height="17" fill="#f3f3f3"/><rect x="453.8" y="493" width="1" height="17" fill="#f3f3f3"/><rect x="460.4" y="493" width="1" height="17" fill="#f3f3f3"/><rect x="467.1" y="493" width="1" height="17" fill="#f3f3f3"/><rect x="473.8" y="493" width="1" height="17" fill="#f3f3f3"/><rect x="480.5" y="493" width="1" height="17" fill="#f3f3f3"/><rect x="487.2" y="493" width="1" height="17" fill="#f3f3f3"/><rect x="493.8" y="493" width="1" height="17" fill="#f3f3f3"/><rect x="500.5" y="493" width="1" height="17" fill="#f3f3f3"/><rect x="507.2" y="493" width="1" height="17" fill="#f3f3f3"/><rect x="513.9" y="493" width="1" height="17" fill="#f3f3f3"/><rect x="520.6" y="493" width="1" height="17" fill="#f3f3f3"/><rect x="527.2" y="493" width="1" height="17" fill="#f3f3f3"/><rect x="533.9" y="493" width="1" height="17" fill="#f3f3f3"/><rect x="540.6" y="493" width="1" height="17" fill="#f3f3f3"/><rect x="547.3" y="493" width="1" height="17" fill="#f3f3f3"/><rect x="554.0" y="493" width="1" height="17" fill="#f3f3f3"/><rect x="560.6" y="493" width="1" height="17" fill="#f3f3f3"/><rect x="567.3" y="493" width="1" height="17" fill="#f3f3f3"/><rect x="574.0" y="493" width="1" height="17" fill="#f3f3f3"/><rect x="580.7" y="493" width="1" height="17" fill="#f3f3f3"/><rect x="587.4" y="493" width="1" height="17" fill="#f3f3f3"/><rect x="594.0" y="493" width="1" height="17" fill="#f3f3f3"/><rect x="600.7" y="493" width="1" height="17" fill="#f3f3f3"/><rect x="607.4" y="493" width="1" height="17" fill="#f3f3f3"/><rect x="614.1" y="493" width="1" height="17" fill="#f3f3f3"/><rect x="620.8" y="493" width="1" height="17" fill="#f3f3f3"/><rect x="234.7" y="493" width="5.5" height="17" fill="#e9e9e5"/><rect x="268.1" y="493" width="5.5" height="17" fill="#e9e9e5"/><rect x="301.5" y="493" width="5.5" height="17" fill="#e9e9e5"/><rect x="334.9" y="493" width="5.5" height="17" fill="#e9e9e5"/><rect x="368.3" y="493" width="5.5" height="17" fill="#e9e9e5"/><rect x="401.7" y="493" width="5.5" height="17" fill="#e9e9e5"/><rect x="435.1" y="493" width="5.5" height="17" fill="#e9e9e5"/><rect x="468.5" y="493" width="5.5" height="17" fill="#e9e9e5"/><rect x="501.9" y="493" width="5.5" height="17" fill="#e9e9e5"/><rect x="535.3" y="493" width="5.5" height="17" fill="#e9e9e5"/><rect x="568.7" y="493" width="5.5" height="17" fill="#e9e9e5"/><rect x="602.1" y="493" width="5.5" height="17" fill="#e9e9e5"/>
 <rect x="206.5" y="492" width="1.6" height="18" fill="#585858"/>
 <rect x="209" y="500" width="4" height="4" fill="#000"/>
 <rect x="270.6" y="491" width="1.2" height="19" fill="#e65252"/>
 <!-- mosaic -->
 <rect x="627" y="441" width="154" height="70" fill="#fff"/>
 <path d="M690 447 L778 443 V451 Z" fill="#f0f0f0"/>
 <rect x="629" y="455" width="149" height="9" fill="#f8f8f8"/>
 <rect x="629.5" y="464" width="13.7" height="13.6" fill="#efefef"/><rect x="629.5" y="477.2" width="13.7" height="14.8" fill="#cfcfcf"/><rect x="629.5" y="491.6" width="13.7" height="12" fill="#dedede"/><rect x="642.6" y="464" width="13.5" height="13.6" fill="#ececec"/><rect x="642.6" y="477.2" width="13.5" height="14.8" fill="#e3e3e3"/><rect x="642.6" y="491.6" width="13.5" height="12" fill="#dfdfdf"/><rect x="655.5" y="464" width="13.7" height="13.6" fill="#eaeaea"/><rect x="655.5" y="477.2" width="13.7" height="14.8" fill="#e8e8e8"/><rect x="655.5" y="491.6" width="13.7" height="12" fill="#e1e1e1"/><rect x="668.6" y="464" width="14.0" height="13.6" fill="#e2e2e2"/><rect x="668.6" y="477.2" width="14.0" height="14.8" fill="#d6d6d6"/><rect x="668.6" y="491.6" width="14.0" height="12" fill="#d8d8d8"/><rect x="682" y="464" width="14.2" height="13.6" fill="#e8e8e8"/><rect x="682" y="477.2" width="14.2" height="14.8" fill="#e2e2e2"/><rect x="682" y="491.6" width="14.2" height="12" fill="#dedede"/><rect x="695.6" y="464" width="14.6" height="13.6" fill="#dedede"/><rect x="695.6" y="477.2" width="14.6" height="14.8" fill="#cdcdcd"/><rect x="695.6" y="491.6" width="14.6" height="12" fill="#d6d6d6"/><rect x="709.6" y="464" width="14.0" height="13.6" fill="#e9e9e9"/><rect x="709.6" y="477.2" width="14.0" height="14.8" fill="#e4e4e4"/><rect x="709.6" y="491.6" width="14.0" height="12" fill="#dcdcdc"/><rect x="723" y="464" width="14.2" height="13.6" fill="#e6e6e6"/><rect x="723" y="477.2" width="14.2" height="14.8" fill="#e0e0e0"/><rect x="723" y="491.6" width="14.2" height="12" fill="#dcdcdc"/><rect x="736.6" y="464" width="14.0" height="13.6" fill="#dcdcdc"/><rect x="736.6" y="477.2" width="14.0" height="14.8" fill="#c8c8c8"/><rect x="736.6" y="491.6" width="14.0" height="12" fill="#d4d4d4"/><rect x="750" y="464" width="14.2" height="13.6" fill="#e9e9e9"/><rect x="750" y="477.2" width="14.2" height="14.8" fill="#e6e6e6"/><rect x="750" y="491.6" width="14.2" height="12" fill="#dedede"/><rect x="763.6" y="464" width="14.0" height="13.6" fill="#e0e0e0"/><rect x="763.6" y="477.2" width="14.0" height="14.8" fill="#cecece"/><rect x="763.6" y="491.6" width="14.0" height="12" fill="#d8d8d8"/>
 <path d="M627 464 H640 L627 478 Z" fill="#f4f4f4"/>
 <path d="M627 491 L640 504 H627 Z" fill="#fff"/>
 <rect x="777" y="441" width="4" height="64" fill="#f6f6f6"/>
</svg>
<div class="t" style="left:16px;top:445px;font-size:10px;">时间轴面板</div>
<div class="t" style="left:50px;top:473.5px;font-size:10px;font-family:'Liberation Mono','Noto Sans CJK SC',monospace;">[群组]</div>
<div class="t" style="left:16px;top:495px;font-size:10px;">位置</div>

</div>

<!-- dropdown -->
<div id="dd">

 <div class="t" style="top:3.5px">放大(I)</div><div class="t k" style="left:135px;top:4px">+</div>
 <div class="t" style="top:22px">缩小(O)</div><div class="t k" style="left:137px;top:22px">-</div>
 <div class="t" style="top:40px">显示全图(F)</div>
 <div class="s" style="top:59px"></div>
 <div class="t g" style="top:65px">输出预览(V)</div><div class="t k g" style="left:131px;top:65px">F8</div>
 <div class="s" style="top:83px"></div>
 <div class="t" style="top:89px">播放(P)</div>
 <div class="t g" style="top:107px">停止(S)</div>
 <div class="t" style="top:125px">往返(N)</div>
 <div class="t" style="top:144px">循环(L)</div>
 <div class="s" style="top:163px"></div>
 <div class="abs" style="left:2px;top:166px;width:19px;height:19px;background:#91c9f7"></div>
 <svg class="abs" style="left:2px;top:166px" width="19" height="19" viewBox="0 0 19 19"><path d="M5 9.5 L8 12.5 L14 6" fill="none" stroke="#2b2b2b" stroke-width="1.3"/></svg>
 <div class="t" style="top:168px">启用智能建构(R)</div>
 <div class="s" style="top:187px"></div>
 <div class="t" style="top:192px">工具面板管理(T)</div><svg class="abs" style="left:144px;top:195px" width="6" height="9" viewBox="0 0 6 9"><path d="M1 1 L4.6 4.5 L1 8" fill="none" stroke="#444" stroke-width="1"/></svg>
 <div class="s" style="top:211px"></div>
 <div class="t" style="top:217px">网格(G)</div><svg class="abs" style="left:144px;top:219px" width="6" height="9" viewBox="0 0 6 9"><path d="M1 1 L4.6 4.5 L1 8" fill="none" stroke="#444" stroke-width="1"/></svg>
 <div class="t" style="top:235px">轴坐标(A)</div>
 <div class="t" style="top:254px">选取坐标(E)</div>

</div>

</div>
</body>
</html>
